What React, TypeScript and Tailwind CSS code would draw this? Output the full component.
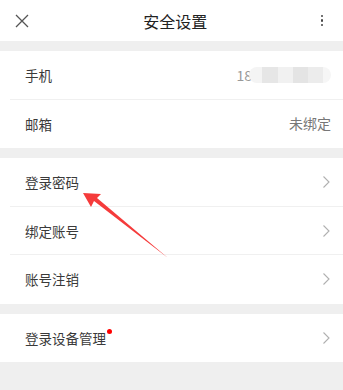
const font = { fontFamily: '"Noto Sans CJK SC", "Noto Sans", sans-serif' };

const Chevron = () => (
  <svg width="9" height="14" viewBox="0 0 9 14" className="text-[#b0b0b0]">
    <path d="M1.5 1.5 L7 7 L1.5 12.5" fill="none" stroke="currentColor" strokeWidth="1.1" />
  </svg>
);

const Row = ({
  label,
  right,
  chevron,
  dot,
  divider,
}: {
  label: string;
  right?: React.ReactNode;
  chevron?: boolean;
  dot?: boolean;
  divider?: boolean;
}) => (
  <div className="relative flex h-[48.5px] items-center pl-[25px] pr-[12px]">
    <span className="relative text-[13.5px] text-[#3a3a3a]">
      {label}
      {dot && (
        <span className="absolute -right-[6px] top-[1px] h-[5px] w-[5px] rounded-full bg-[#f00]" />
      )}
    </span>
    <div className="ml-auto flex items-center">
      {right}
      {chevron && <Chevron />}
    </div>
    {divider && <div className="absolute bottom-0 left-[10px] right-0 h-px bg-[#f0f0f0]" />}
  </div>
);

export default function App() {
  return (
    <div className="relative h-[390px] w-[343px] overflow-hidden bg-[#efefef]" style={font}>
      <div className="flex h-[41px] items-center bg-white px-[14px]">
        <svg width="16" height="16" viewBox="0 0 16 16" className="text-[#555]">
          <path d="M2 2 L14 14 M14 2 L2 14" stroke="currentColor" strokeWidth="1.3" fill="none" />
        </svg>
        <div className="flex-1 text-center text-[16px] text-[#222]">安全设置</div>
        <div className="flex flex-col items-center gap-[2px] pr-[6px]">
          <span className="h-[2.5px] w-[2.5px] rounded-full bg-[#444]" />
          <span className="h-[2.5px] w-[2.5px] rounded-full bg-[#444]" />
          <span className="h-[2.5px] w-[2.5px] rounded-full bg-[#444]" />
        </div>
      </div>

      <div className="mt-[10px] bg-white">
        <Row
          label="手机"
          divider
          right={
            <div className="flex items-center">
              <span className="text-[14px] text-[#999]">18</span>
              <div className="ml-[-3px] flex h-[16px] overflow-hidden rounded-[8px]">
                <div className="w-[13px] bg-[#f4f4f4]" />
                <div className="w-[16px] bg-[#e6e6e6]" />
                <div className="w-[15px] bg-[#f1f1f1]" />
                <div className="w-[15px] bg-[#e4e4e4]" />
                <div className="w-[15px] bg-[#ececec]" />
                <div className="w-[8px] bg-[#f6f6f6]" />
              </div>
            </div>
          }
        />
        <Row label="邮箱" right={<span className="text-[14px] text-[#777]">未绑定</span>} />
      </div>

      <div className="mt-[10px] bg-white">
        <Row label="登录密码" chevron divider />
        <Row label="绑定账号" chevron divider />
        <Row label="账号注销" chevron />
      </div>

      <div className="mt-[10px] bg-white">
        <Row label="登录设备管理" chevron dot />
      </div>

      <svg className="absolute left-0 top-0" width="343" height="390" viewBox="0 0 343 390">
        <polygon points="83,193 101,194 97,198 168,258 94,201 91,207" fill="#f53b3b" />
      </svg>
    </div>
  );
}
